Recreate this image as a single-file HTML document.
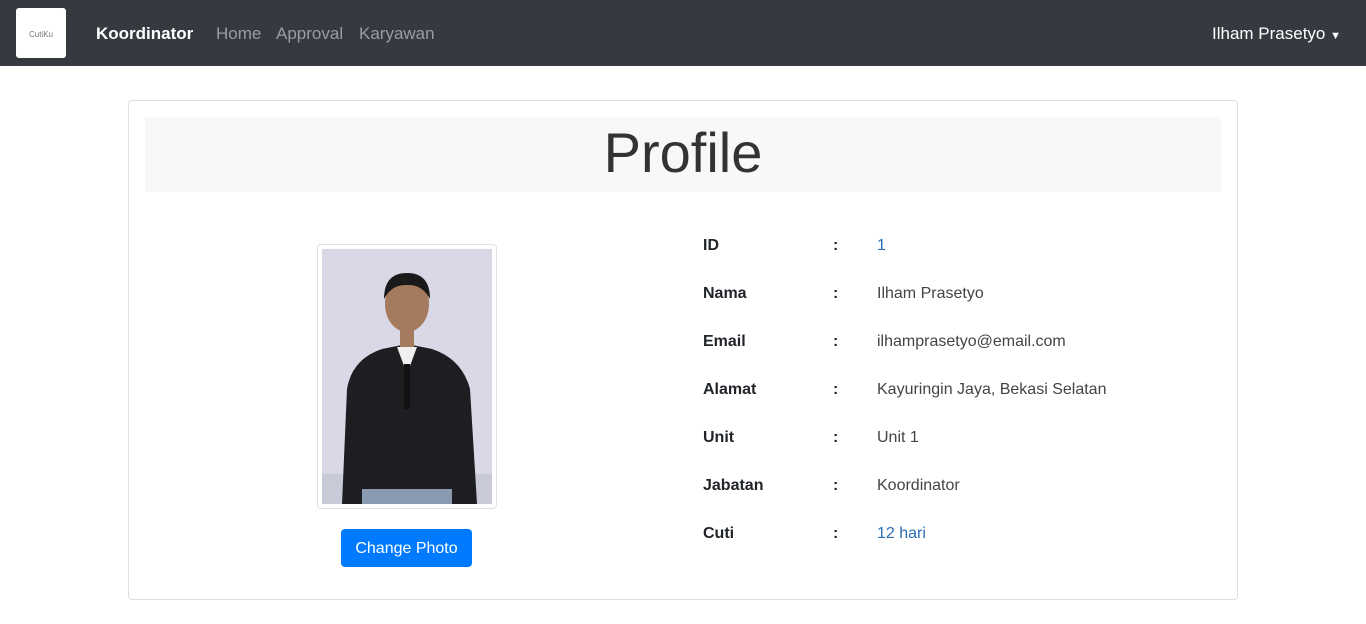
<!DOCTYPE html>
<html><head><style>
*{box-sizing:border-box;margin:0;padding:0}
body{width:1366px;height:624px;background:#fff;font-family:"Liberation Sans",sans-serif;color:#212529;position:relative;overflow:hidden}
.nav{position:absolute;left:0;top:0;width:1366px;height:66px;background:#343a40}
.logo{position:absolute;left:16px;top:8px;width:50px;height:50px;background:#fff;border-radius:3px;text-align:center;font-size:8px;color:#777;padding-top:22px}
.brand{position:absolute;left:96px;top:24px;color:#fff;font-weight:bold;font-size:17px}
.lnk{position:absolute;top:24px;color:#9a9da0;font-size:17px}
.user{position:absolute;left:1212px;top:24px;color:#fff;font-size:17px}
.card{position:absolute;left:128px;top:100px;width:1110px;height:500px;border:1px solid #dfdfdf;border-radius:4px}
.jum{position:absolute;left:145px;top:117px;width:1076px;height:75px;background:#f7f8f9;text-align:center;font-size:56px;font-weight:300;color:#333;line-height:72px}
.frame{position:absolute;left:317px;top:244px;width:180px;height:265px;border:1px solid #dee2e6;border-radius:4px;padding:4px;background:#fff}
.btn{position:absolute;left:341px;top:529px;width:131px;height:38px;background:#007bff;color:#fff;border-radius:4px;font-size:16px;text-align:center;line-height:39px}
.r{position:absolute;font-size:16px;margin-top:1px}
.k{left:703px;font-weight:bold}
.c{left:833px;font-weight:bold}
.v{left:877px;color:#444}
</style></head><body>
<div class="nav">
<div class="logo">CutiKu</div>
<div class="brand">Koordinator</div>
<div class="lnk" style="left:216px">Home</div>
<div class="lnk" style="left:276px">Approval</div>
<div class="lnk" style="left:359px">Karyawan</div>
<div class="user">Ilham Prasetyo <span style="font-size:11px">▼</span></div>
</div>
<div class="card"></div>
<div class="jum">Profile</div>
<div class="frame">
<svg width="170" height="255" viewBox="0 0 170 255">
<rect width="170" height="255" fill="#d8d8e6"/>
<rect y="225" width="170" height="30" fill="#c8cad8"/>
<path d="M20 255 L25 140 Q30 110 60 100 L85 95 L110 100 Q140 110 148 140 L155 255Z" fill="#1e1e22"/>
<path d="M75 98 L85 125 L95 98Z" fill="#f0f0f0"/>
<rect x="82" y="115" width="6" height="45" fill="#111"/>
<ellipse cx="85" cy="55" rx="22" ry="28" fill="#a57a5e"/>
<path d="M62 50 Q62 24 85 24 Q108 24 108 50 Q100 35 85 36 Q70 35 62 50Z" fill="#1a1a1a"/>
<rect x="78" y="80" width="14" height="18" fill="#a57a5e"/>
<rect x="40" y="240" width="90" height="15" fill="#8a9ab0"/>
</svg>
</div>
<div class="btn">Change Photo</div>
<div class="r k" style="top:236px">ID</div><div class="r c" style="top:236px">:</div><div class="r v" style="top:236px;color:#2a6cb0">1</div>
<div class="r k" style="top:284px">Nama</div><div class="r c" style="top:284px">:</div><div class="r v" style="top:284px">Ilham Prasetyo</div>
<div class="r k" style="top:332px">Email</div><div class="r c" style="top:332px">:</div><div class="r v" style="top:332px">ilhamprasetyo@email.com</div>
<div class="r k" style="top:380px">Alamat</div><div class="r c" style="top:380px">:</div><div class="r v" style="top:380px">Kayuringin Jaya, Bekasi Selatan</div>
<div class="r k" style="top:428px">Unit</div><div class="r c" style="top:428px">:</div><div class="r v" style="top:428px">Unit 1</div>
<div class="r k" style="top:476px">Jabatan</div><div class="r c" style="top:476px">:</div><div class="r v" style="top:476px">Koordinator</div>
<div class="r k" style="top:524px">Cuti</div><div class="r c" style="top:524px">:</div><div class="r v" style="top:524px;color:#2a6cb0">12 hari</div>
</body></html>
